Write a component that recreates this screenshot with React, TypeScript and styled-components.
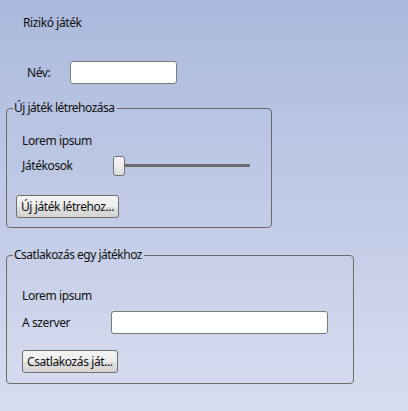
import React from "react";
import styled, { createGlobalStyle } from "styled-components";

const Global = createGlobalStyle`
  html, body { margin: 0; padding: 0; }
  body {
    width: 408px;
    height: 411px;
    overflow: hidden;
    background: linear-gradient(to bottom, #aab9dc 0%, #d8ddf0 100%);
    font-family: "Noto Sans", "Open Sans", sans-serif;
    font-size: 12px;
    letter-spacing: -0.4px;
    color: #0f0f0f;
  }
`;

const Page = styled.div`
  display: flex;
  flex-direction: column;
  padding: 15px 0 0 6px;
`;

const Title = styled.div`
  line-height: 16px;
  margin-left: 17px;
`;

const NameRow = styled.div`
  display: flex;
  align-items: center;
  margin-top: 30px;
  margin-left: 21px;
`;

const Label = styled.span<{ $width?: number; $indent?: number }>`
  line-height: 16px;
  ${(p) => (p.$width ? `width: ${p.$width}px; flex: none;` : "")}
  ${(p) => (p.$indent ? `margin-left: ${p.$indent}px;` : "")}
`;

const TextInput = styled.input<{ $width: number }>`
  box-sizing: border-box;
  width: ${(p) => p.$width}px;
  height: 23px;
  border: 1px solid #7b7b7b;
  border-radius: 3px;
  background: #ffffff;
  padding: 0 4px;
  font: inherit;
  outline: none;
`;

const Group = styled.fieldset<{ $width: number; $top: number }>`
  box-sizing: border-box;
  width: ${(p) => p.$width}px;
  margin: ${(p) => p.$top}px 0 0 0;
  padding: 0;
  border: 1px solid #6a6a6a;
  border-radius: 4px;
  min-width: 0;
`;

const Legend = styled.legend`
  margin-left: 6px;
  padding: 0 2px 0 1px;
  line-height: 16px;
  letter-spacing: -0.5px;
`;

const GroupBody = styled.div<{ $pt: number; $pl: number; $pb: number }>`
  display: flex;
  flex-direction: column;
  align-items: flex-start;
  padding: ${(p) => `${p.$pt}px 0 ${p.$pb}px ${p.$pl}px`};
`;

const Row = styled.div<{ $mt: number; $h?: number }>`
  display: flex;
  align-items: center;
  margin-top: ${(p) => p.$mt}px;
  ${(p) => (p.$h ? `height: ${p.$h}px;` : "")}
`;

const Button = styled.button<{ $mt: number }>`
  box-sizing: border-box;
  height: 23px;
  margin-top: ${(p) => p.$mt}px;
  padding: 0 4px;
  border: 1px solid #707070;
  border-radius: 3px;
  background: linear-gradient(to bottom, #f4f4f4 0%, #ececec 50%, #e0e0e0 51%, #d4d4d4 100%);
  font: inherit;
  letter-spacing: -0.4px;
  color: #0f0f0f;
  line-height: 16px;
`;

const Slider = styled.div`
  position: relative;
  width: 138px;
  height: 20px;
  display: flex;
  align-items: center;
`;

const Track = styled.div`
  margin-left: 11px;
  width: 126px;
  height: 3px;
  background: #6c6c6c;
  border-radius: 1px;
`;

const Thumb = styled.div`
  position: absolute;
  left: 0;
  top: 0;
  box-sizing: border-box;
  width: 12px;
  height: 20px;
  border: 1px solid #6f6f6f;
  border-radius: 3px;
  background: linear-gradient(to bottom, #fafafa, #dcdcdc);
`;

export default function App() {
  return (
    <>
      <Global />
      <Page>
        <Title>Rizikó játék</Title>
        <NameRow>
          <Label $width={43}>Név:</Label>
          <TextInput $width={107} />
        </NameRow>

        <Group $width={266} $top={16}>
          <Legend>Új játék létrehozása</Legend>
          <GroupBody $pt={17} $pl={9} $pb={9}>
            <Label $indent={6}>Lorem ipsum</Label>
            <Row $mt={6} $h={21}>
              <Label $indent={6} $width={91}>Játékosok</Label>
              <Slider>
                <Track />
                <Thumb />
              </Slider>
            </Row>
            <Button $mt={19}>Új játék létrehoz...</Button>
          </GroupBody>
        </Group>

        <Group $width={348} $top={19}>
          <Legend>Csatlakozás egy játékhoz</Legend>
          <GroupBody $pt={25} $pl={15} $pb={10}>
            <Label>Lorem ipsum</Label>
            <Row $mt={7}>
              <Label $width={89}>A szerver</Label>
              <TextInput $width={217} />
            </Row>
            <Button $mt={16}>Csatlakozás ját...</Button>
          </GroupBody>
        </Group>
      </Page>
    </>
  );
}
